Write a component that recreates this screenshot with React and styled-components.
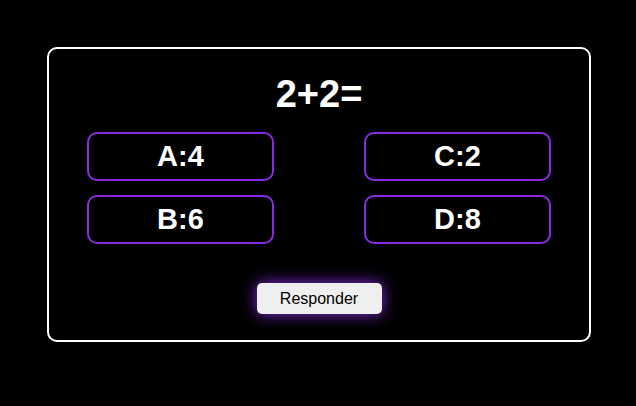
import React from 'react';
import styled, { createGlobalStyle } from 'styled-components';

const GlobalStyle = createGlobalStyle`
    html, body {
        margin: 0;
        padding: 0;
        background: #000;
    }
    body {
        font-family: "Liberation Sans", Arial, sans-serif;
    }
`;

const answers = [
    { key: 'A', value: 4 },
    { key: 'C', value: 2 },
    { key: 'B', value: 6 },
    { key: 'D', value: 8 }
];

const App = () => {
    return (
        <Page>
            <GlobalStyle />
            <Card>
                <Question>2+2=</Question>
                <AnswerGrid>
                    {answers.map(a => (
                        <Answer key={a.key}>{a.key}:{a.value}</Answer>
                    ))}
                </AnswerGrid>
                <SubmitButton>Responder</SubmitButton>
            </Card>
        </Page>
    );
};

// 전체 페이지 (검은 배경)
const Page = styled.div`
    min-height: 406px;
    box-sizing: border-box;
    padding: 47px 0 0 47px;
    background: #000;
`;

// 흰색 테두리 카드
const Card = styled.div`
    width: 544px;
    height: 295px;
    box-sizing: border-box;
    border: 2px solid #fff;
    border-radius: 10px;
    padding: 25px 38px 0;
    display: flex;
    flex-direction: column;
    align-items: center;
`;

const Question = styled.h1`
    margin: 0 0 17px;
    font-size: 38px;
    font-weight: bold;
    line-height: 41px;
    color: #fff;
`;

const AnswerGrid = styled.div`
    display: grid;
    grid-template-columns: 187px 187px;
    column-gap: 90px;
    row-gap: 14px;
`;

const Answer = styled.div`
    height: 49px;
    box-sizing: border-box;
    border: 2px solid #8a2be2;
    border-radius: 10px;
    display: flex;
    align-items: center;
    justify-content: center;
    color: #fff;
    font-size: 29px;
    font-weight: bold;
    cursor: pointer;
`;

// 보라색 빛나는 제출 버튼
const SubmitButton = styled.button`
    margin-top: 39px;
    width: 125px;
    height: 31px;
    border: none;
    border-radius: 5px;
    background: #efefef;
    color: #000;
    font-family: "Liberation Sans", Arial, sans-serif;
    font-size: 16px;
    box-shadow: 0 0 15px #8a2be2;
    cursor: pointer;
`;

export default App;
